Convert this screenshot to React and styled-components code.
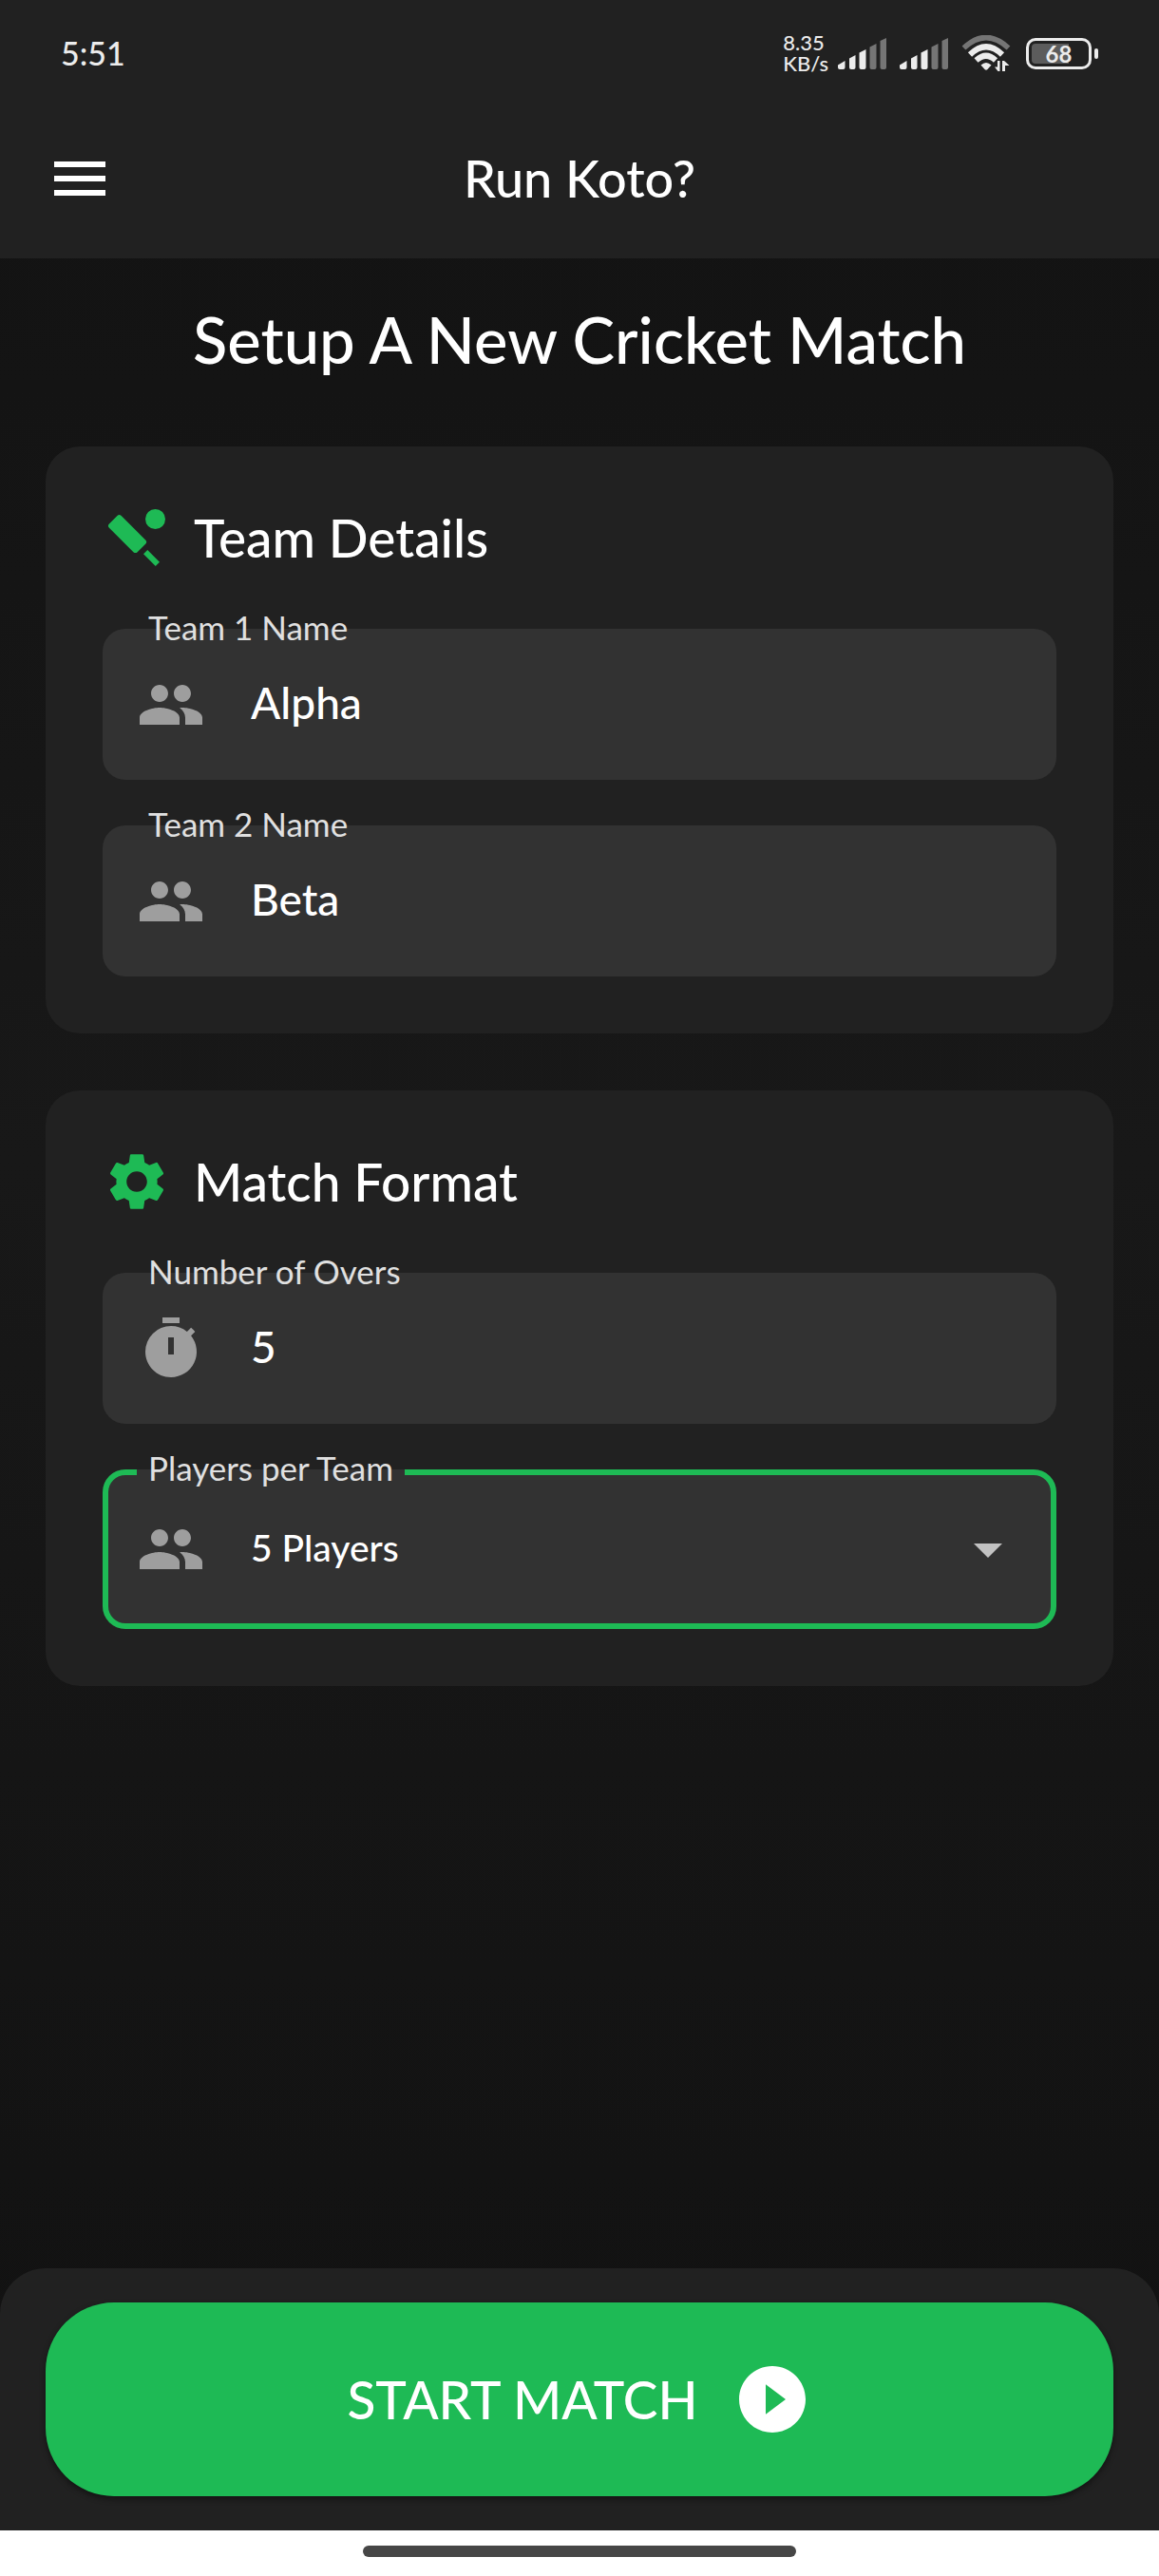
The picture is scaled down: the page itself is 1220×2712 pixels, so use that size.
import React, { useState } from "react";
import styled, { createGlobalStyle } from "styled-components";
import {
  MdArrowDropDown,
  MdMenu,
  MdPeople,
  MdPlayCircleFilled,
  MdSettings,
  MdSportsCricket,
  MdTimer,
} from "react-icons/md";

const color = {
  accent: "#1eba55",
  surface: "#212121",
  field: "#323232",
  text: "#ffffff",
  label: "#e0e0e0",
  icon: "#9e9e9e",
};

const GlobalStyle = createGlobalStyle`
  *, *::before, *::after { box-sizing: border-box; }
  body {
    margin: 0;
    background: #121212;
    color: ${color.text};
    font-family: Lato, "Open Sans", sans-serif;
    font-weight: 500;
  }
  button, input, select { font: inherit; color: inherit; }
`;

const Screen = styled.div`
  display: flex;
  flex-direction: column;
  min-height: 100vh;
  background: linear-gradient(#121212, #181818 45%, #111111);
`;

const TopArea = styled.div`
  background: ${color.surface};
`;

const StatusBar = styled.div`
  display: flex;
  align-items: center;
  justify-content: space-between;
  height: 104px;
  padding: 8px 64px 0;
  color: #ececec;
`;

const Clock = styled.time`
  font-size: 34px;
  line-height: 40px;
`;

const StatusIcons = styled.div`
  display: flex;
  align-items: center;
  gap: 14px;
`;

const Speed = styled.div`
  margin-right: -4px;
  font-size: 22px;
  line-height: 22px;
`;

const Battery = styled.div`
  display: flex;
  align-items: center;
  gap: 3px;
  margin-left: 2px;

  &::after {
    content: "";
    width: 4px;
    height: 11px;
    border-radius: 2px;
    background: #ececec;
  }
`;

const BatteryBody = styled.div`
  width: 69px;
  height: 33px;
  border: 3px solid #ececec;
  border-radius: 10px;
  background: linear-gradient(90deg, #5c5c5c 68%, transparent 68%) content-box;
  padding: 3px;
  font-size: 24px;
  font-weight: 700;
  line-height: 21px;
  text-align: center;
`;

const AppBar = styled.header`
  display: grid;
  grid-template-columns: 72px 1fr 72px;
  align-items: center;
  height: 168px;
  padding: 0 48px;
`;

const MenuButton = styled.button`
  display: flex;
  padding: 0;
  border: 0;
  background: none;
`;

const AppTitle = styled.div`
  font-size: 54px;
  line-height: 72px;
  text-align: center;
`;

const Content = styled.main`
  display: flex;
  flex: 1;
  flex-direction: column;
  gap: 60px;
  padding: 48px;
`;

const PageTitle = styled.h1`
  margin: 0;
  padding-bottom: 16px;
  font-size: 67px;
  font-weight: 500;
  line-height: 74px;
  text-align: center;
`;

const Card = styled.section`
  display: flex;
  flex-direction: column;
  gap: 60px;
  padding: 60px;
  border-radius: 36px;
  background: ${color.surface};
`;

const CardHeading = styled.h2`
  display: flex;
  align-items: center;
  gap: 24px;
  margin: 0;
  font-size: 55px;
  font-weight: 500;
  line-height: 72px;

  svg { color: ${color.accent}; }
`;

const Fields = styled.div`
  display: flex;
  flex-direction: column;
  gap: 48px;
`;

const FieldBox = styled.div`
  position: relative;
  display: flex;
  align-items: center;
  gap: 48px;
  height: ${(p) => (p.$active ? 168 : 159)}px;
  padding: 0 36px;
  border-radius: 24px;
  background: ${color.field};
  box-shadow: ${(p) => (p.$active ? `inset 0 0 0 6px ${color.accent}` : "none")};

  svg { flex: none; color: ${color.icon}; }
`;

const FieldLabel = styled.label`
  position: absolute;
  top: 0;
  left: 36px;
  padding: 0 12px 4px;
  background: linear-gradient(${color.surface} 50%, ${color.field} 50%);
  color: ${color.label};
  font-size: 35px;
  font-weight: 400;
  line-height: 44px;
  transform: translateY(-50%);
`;

const TextInput = styled.input`
  flex: 1;
  min-width: 0;
  height: 72px;
  padding: 0 0 4px;
  border: 0;
  outline: 0;
  background: none;
  font-size: 46px;
`;

const Select = styled.select`
  flex: 1;
  min-width: 0;
  height: 72px;
  padding: 0 0 4px;
  border: 0;
  outline: 0;
  appearance: none;
  background: none;
  font-size: 39px;

  option { background: ${color.field}; }
`;

const DropArrow = styled(MdArrowDropDown)`
  && { color: #c2c2c2; }
  pointer-events: none;
`;

const BottomPanel = styled.footer`
  padding: 36px 48px;
  border-radius: 48px 48px 0 0;
  background: ${color.surface};
`;

const StartButton = styled.button`
  display: flex;
  align-items: center;
  justify-content: center;
  gap: 36px;
  width: 100%;
  height: 204px;
  border: 0;
  border-radius: 72px;
  background: ${color.accent};
  box-shadow: 0 3px 6px rgba(0, 0, 0, 0.45);
  font-size: 55px;
  line-height: 72px;
`;

const GestureBar = styled.div`
  display: flex;
  align-items: center;
  justify-content: center;
  height: 48px;
  padding-bottom: 4px;
  background: #ffffff;

  &::before {
    content: "";
    width: 456px;
    height: 12px;
    border-radius: 6px;
    background: #464646;
  }
`;

function Signal() {
  return (
    <svg width="51" height="33" viewBox="0 0 51 33" fill="#ececec" aria-hidden="true">
      <path d="M0 28.500 7.500 24v7q0 2-2 2H2q-2 0-2-2z" />
      <path d="M12 21.500 18.500 18v13q0 2-2 2H14q-2 0-2-2z" />
      <path d="M22.500 15.500 29.500 12v19q0 2-2 2h-3q-2 0-2-2z" />
      <path d="M33.500 9.500 40.500 6v25q0 2-2 2h-3q-2 0-2-2z" fill="#757575" />
      <path d="M44.500 3 51 0v31q0 2-2 2h-2.500q-2 0-2-2z" fill="#757575" />
    </svg>
  );
}

function Wifi() {
  return (
    <svg width="52" height="38" viewBox="0 0 52 38" fill="none" aria-hidden="true">
      <path d="M2.500 13.500Q26-8.500 49.500 13.500" stroke="#757575" strokeWidth="5.500" />
      <path d="M9 20.500Q26 4 43 20.500" stroke="#ececec" strokeWidth="6" />
      <path d="M15.500 26.500Q26 17 36 26.500" stroke="#ececec" strokeWidth="6" />
      <path d="M20.500 31.500Q26 26.500 31.500 31.500L27.500 36Q26 37.500 24.500 36Z" fill="#ececec" />
      <path d="M40.500 27V38H38.500L35 33.500H38V27ZM43 38V27H45L50.500 32H46V38Z" fill="#ececec" />
    </svg>
  );
}

function Field({ id, label, icon: Icon, value, onChange, inputMode }) {
  return (
    <FieldBox>
      <FieldLabel htmlFor={id}>{label}</FieldLabel>
      <Icon size={72} aria-hidden="true" />
      <TextInput
        id={id}
        type="text"
        inputMode={inputMode}
        value={value}
        onChange={(e) => onChange(e.target.value)}
      />
    </FieldBox>
  );
}

const playerCounts = [5, 6, 7, 8, 9, 10, 11];

export default function App() {
  const [teamOne, setTeamOne] = useState("Alpha");
  const [teamTwo, setTeamTwo] = useState("Beta");
  const [overs, setOvers] = useState("5");
  const [players, setPlayers] = useState("5");

  return (
    <Screen>
      <GlobalStyle />
      <TopArea>
        <StatusBar>
          <Clock>5:51</Clock>
          <StatusIcons>
            <Speed>
              8.35
              <br />
              KB/s
            </Speed>
            <Signal />
            <Signal />
            <Wifi />
            <Battery>
              <BatteryBody>68</BatteryBody>
            </Battery>
          </StatusIcons>
        </StatusBar>
        <AppBar>
          <MenuButton type="button" aria-label="Open menu">
            <MdMenu size={72} />
          </MenuButton>
          <AppTitle>Run Koto?</AppTitle>
        </AppBar>
      </TopArea>

      <Content>
        <PageTitle>Setup A New Cricket Match</PageTitle>

        <Card>
          <CardHeading>
            <MdSportsCricket size={72} aria-hidden="true" />
            Team Details
          </CardHeading>
          <Fields>
            <Field id="team-1" label="Team 1 Name" icon={MdPeople} value={teamOne} onChange={setTeamOne} />
            <Field id="team-2" label="Team 2 Name" icon={MdPeople} value={teamTwo} onChange={setTeamTwo} />
          </Fields>
        </Card>

        <Card>
          <CardHeading>
            <MdSettings size={72} aria-hidden="true" />
            Match Format
          </CardHeading>
          <Fields>
            <Field
              id="overs"
              label="Number of Overs"
              icon={MdTimer}
              value={overs}
              onChange={setOvers}
              inputMode="numeric"
            />
            <FieldBox $active>
              <FieldLabel htmlFor="players">Players per Team</FieldLabel>
              <MdPeople size={72} aria-hidden="true" />
              <Select id="players" value={players} onChange={(e) => setPlayers(e.target.value)}>
                {playerCounts.map((n) => (
                  <option key={n} value={n}>
                    {n} Players
                  </option>
                ))}
              </Select>
              <DropArrow size={72} aria-hidden="true" />
            </FieldBox>
          </Fields>
        </Card>
      </Content>

      <BottomPanel>
        <StartButton type="button">
          START MATCH
          <MdPlayCircleFilled size={84} aria-hidden="true" />
        </StartButton>
      </BottomPanel>
      <GestureBar />
    </Screen>
  );
}
